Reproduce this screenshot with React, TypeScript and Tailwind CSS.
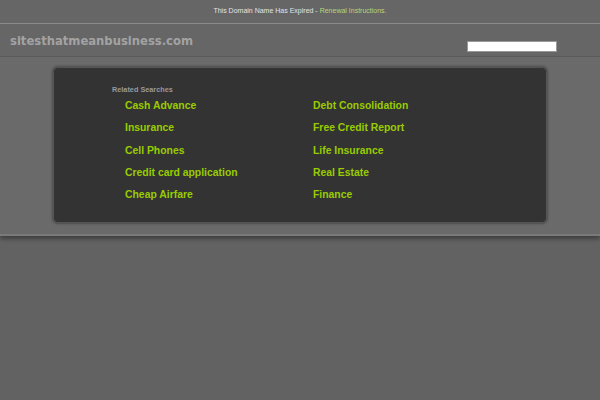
import React from 'react';

const left = ['Cash Advance', 'Insurance', 'Cell Phones', 'Credit card application', 'Cheap Airfare'];
const right = ['Debt Consolidation', 'Free Credit Report', 'Life Insurance', 'Real Estate', 'Finance'];

const App: React.FC = () => {
  return (
    <div className="min-h-[400px] w-full bg-[#626262] font-['Liberation_Sans',Arial,sans-serif]">
      {/* expired notice */}
      <div className="h-[24px] bg-[#666666] border-b border-[#8a8a8a] flex items-center justify-center text-[7px] text-[#e2e2e2]">
        This Domain Name Has Expired -&nbsp;<a href="#" className="text-[#b8d47a]">Renewal Instructions.</a>
      </div>

      {/* header */}
      <div className="h-[33px] bg-[#666666] border-b border-[#5c5c5c] flex items-center justify-between pl-[10px] pr-[43px]">
        <span className="font-['DejaVu_Sans',Verdana,sans-serif] font-bold text-[11.6px] text-[#a3a3a3] mt-[3px]">
          sitesthatmeanbusiness.com
        </span>
        <input type="text" className="w-[90px] h-[11px] bg-white border border-[#999] mt-[13px]" />
      </div>

      {/* content */}
      <div className="bg-[#6a6a6a] pt-[10px] pb-[11px] border-b-2 border-[#7a7a7a] shadow-[0_3px_4px_rgba(0,0,0,0.35)]">
        <div className="mx-[53px] h-[156px] rounded-[5px] bg-[#333333] border border-[#555] shadow-[0_0_3px_rgba(0,0,0,0.6)] pt-[17px] pl-[58px]">
          <p className="text-[7.3px] font-bold text-[#999999] leading-[10px]">Related Searches</p>
          <div className="grid grid-cols-[188px_1fr] pl-[13px] pt-[3px]">
            {[left, right].map((col, i) => (
              <ul key={i} className="flex flex-col">
                {col.map((t) => (
                  <li key={t} className="h-[22.3px] leading-[11px]">
                    <a href="#" className="text-[10.4px] font-bold text-[#99cc00]">{t}</a>
                  </li>
                ))}
              </ul>
            ))}
          </div>
        </div>
      </div>
    </div>
  );
};

export default App;
